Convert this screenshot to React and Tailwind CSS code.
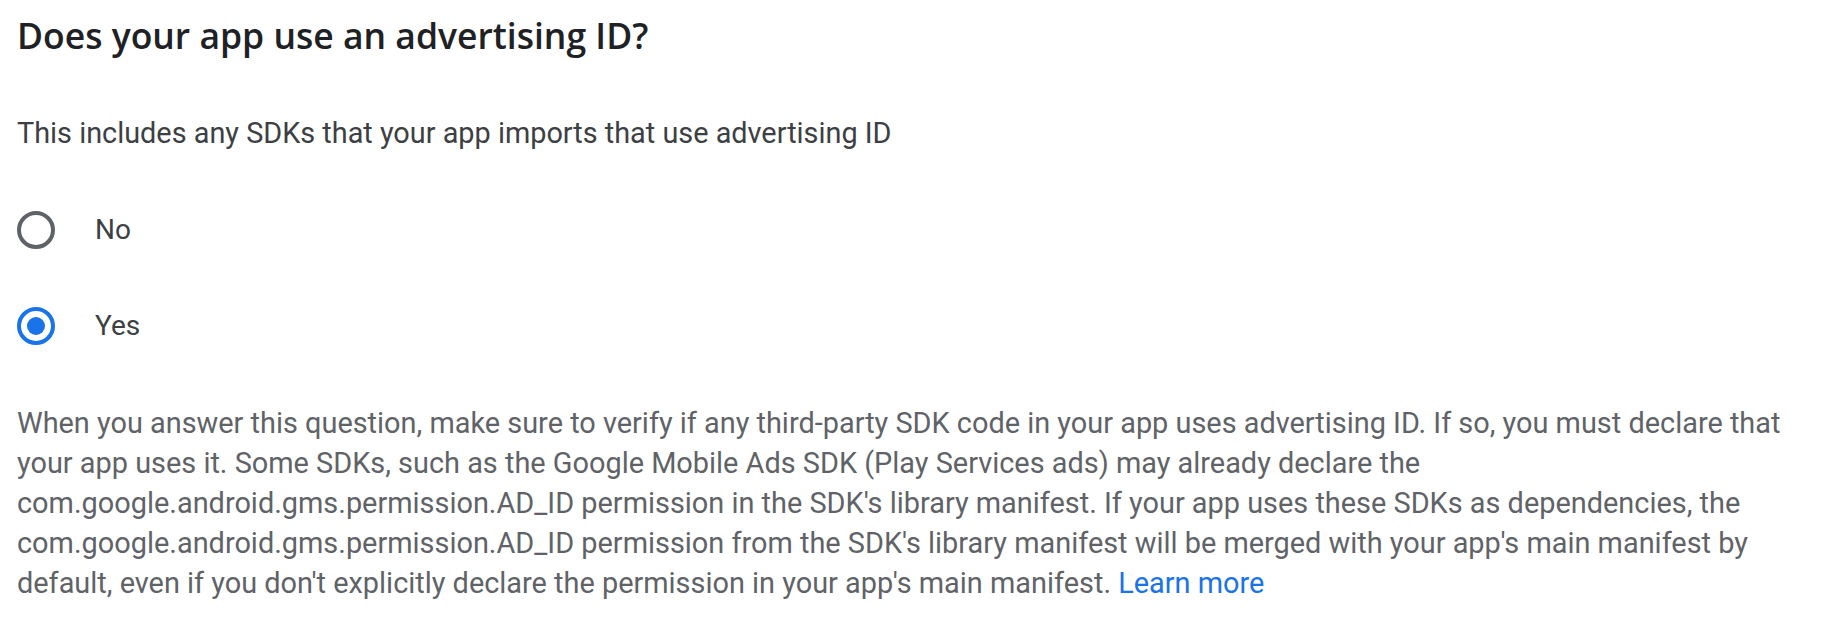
import { useState } from 'react';

const RadioOption = ({ label, checked, onSelect }) => {
    return (
        <label className="flex items-center h-10 cursor-pointer" onClick={onSelect}>
            {checked ? (
                <span className="w-[38px] h-[38px] rounded-full border-[4px] border-[#1a73e8] flex items-center justify-center">
                    <span className="w-[18px] h-[18px] rounded-full bg-[#1a73e8]"></span>
                </span>
            ) : (
                <span className="w-[38px] h-[38px] rounded-full border-[4px] border-[#5f6368]"></span>
            )}
            <span className="ml-[40px] text-[28px] leading-10 text-[#3c4043]">{label}</span>
        </label>
    );
};

const App = () => {
    const [answer, setAnswer] = useState('yes');

    return (
        <div className="bg-white w-[1828px] h-[622px] pl-[17px] pt-[15px] font-['Roboto',sans-serif]">
            {/* Question */}
            <h2 className="font-['Open_Sans',sans-serif] font-semibold text-[35.5px] leading-10 text-[#202124]">
                Does your app use an advertising ID?
            </h2>
            <p className="mt-[58px] text-[28.85px] leading-10 text-[#3c4043]">
                This includes any SDKs that your app imports that use advertising ID
            </p>

            {/* Options */}
            <div className="mt-[57px] flex flex-col gap-[56px]">
                <RadioOption label="No" checked={answer === 'no'} onSelect={() => setAnswer('no')} />
                <RadioOption label="Yes" checked={answer === 'yes'} onSelect={() => setAnswer('yes')} />
            </div>

            {/* Help text */}
            <p className="mt-[57px] w-[1795px] text-[28.9px] leading-10 text-[#5f6368]">
                When you answer this question, make sure to verify if any third-party SDK code in your app uses advertising ID. If so, you must declare that your app uses it. Some SDKs, such as the Google Mobile Ads SDK (Play Services ads) may already declare the com.google.android.gms.permission.AD_ID permission in the SDK's library manifest. If your app uses these SDKs as dependencies, the com.google.android.gms.permission.AD_ID permission from the SDK's library manifest will be merged with your app's main manifest by default, even if you don't explicitly declare the permission in your app's main manifest.{' '}
                <a href="#" className="text-[#1a73e8]">Learn more</a>
            </p>
        </div>
    );
};

export default App;
